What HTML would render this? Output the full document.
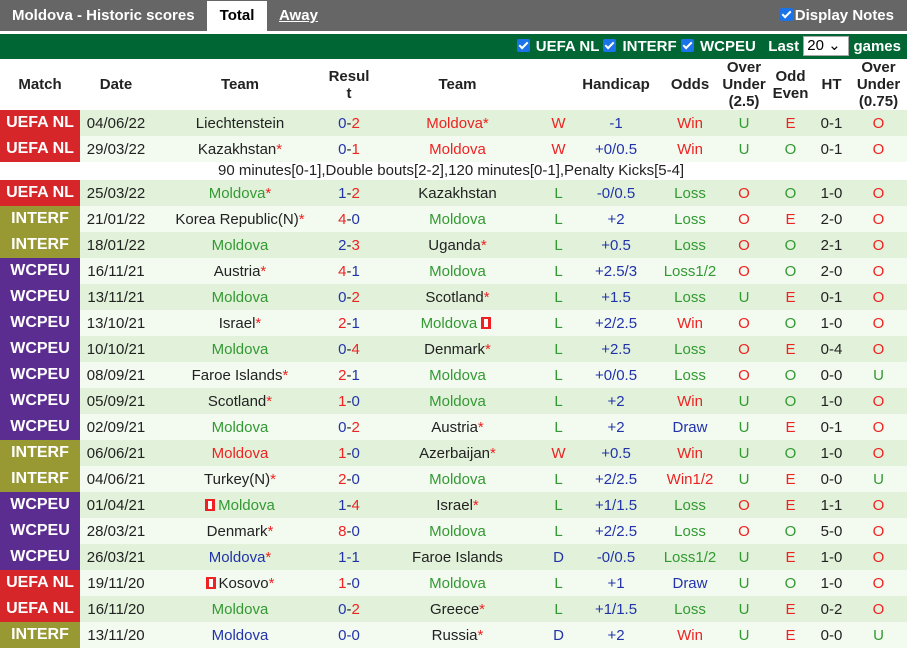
<!DOCTYPE html>
<html><head><meta charset="utf-8"><style>
*{margin:0;padding:0;box-sizing:border-box}
body{width:907px;height:651px;overflow:hidden;background:#fff;font-family:"Liberation Sans",Arial,sans-serif;font-size:15px;color:#222}
.top{height:33px;background:#666;position:relative;border-bottom:2px solid #fff}
.top .t{position:absolute;left:12px;top:7px;color:#fff;font-weight:bold;font-size:15px}
.tab{position:absolute;left:207px;top:1px;width:60px;height:31px;background:#fff;font-weight:bold;text-align:center;line-height:29px;color:#000}
.away{position:absolute;left:279px;top:7px;color:#fff;font-weight:bold;text-decoration:underline}
.dn{position:absolute;right:13px;top:7px;color:#fff;font-weight:bold}
.cb{display:inline-block;width:13px;height:13px;background:#1a73e8;border-radius:2px;vertical-align:-1px;position:relative;margin-right:2px}
.cb:after{content:"";position:absolute;left:4px;top:1px;width:3px;height:7px;border:solid #fff;border-width:0 2px 2px 0;transform:rotate(45deg)}
.green{height:26px;background:#006633;color:#fff;font-weight:bold;text-align:right;padding-right:6px;line-height:25px;border-top:1px solid #fff}
.sel{display:inline-block;background:#fff;color:#000;font-weight:normal;width:46px;height:20px;line-height:18px;border:1px solid #aaa;padding-left:3px;vertical-align:1px;text-align:left;font-size:15px}
table{border-collapse:collapse;table-layout:fixed;width:907px}
td,th{text-align:center;white-space:nowrap;overflow:hidden;padding:0}
th{height:51px;font-weight:bold;color:#222;line-height:17px}
tr.ra td{background:#e2f2da}
tr.rb td{background:#f3faf0}
tr.n td{background:#fff;height:18px;line-height:16px;font-size:15px}
td{height:26px}
td.m{color:#fff;font-weight:bold;font-size:16px}
.un{background:#d7262a!important}.it{background:#999933!important}.wc{background:#5c2d91!important}
.r{color:#e22}.g{color:#339933}.b{color:#2233aa}.k{color:#222}
.fl{display:inline-block;width:10px;height:12px;background:#e22;position:relative;vertical-align:-1px;margin-right:3px}
.fl:after{content:"";position:absolute;left:3px;top:2px;width:4px;height:8px;background:#fff}
</style></head><body>
<div class="top"><span class="t">Moldova - Historic scores</span><div class="tab">Total</div><span class="away">Away</span><span class="dn"><span class="cb"></span>Display Notes</span></div>
<div class="green"><span class="cb"></span> UEFA NL <span class="cb"></span> INTERF <span class="cb"></span> WCPEU &nbsp; Last <span class="sel">20 &#8964;</span> games</div>
<table>
<colgroup><col style="width:80px"><col style="width:72px"><col style="width:176px"><col style="width:42px"><col style="width:175px"><col style="width:27px"><col style="width:88px"><col style="width:60px"><col style="width:48px"><col style="width:45px"><col style="width:37px"><col style="width:57px"></colgroup>
<tr><th>Match</th><th>Date</th><th>Team</th><th>Resul<br>t</th><th>Team</th><th></th><th>Handicap</th><th>Odds</th><th>Over<br>Under<br>(2.5)</th><th>Odd<br>Even</th><th>HT</th><th>Over<br>Under<br>(0.75)</th></tr>
<tr class="ra"><td class="m un">UEFA NL</td><td>04/06/22</td><td>Liechtenstein</td><td><span class="b">0</span>-<span class="r">2</span></td><td class="r">Moldova*</td><td class="r">W</td><td class="b">-1</td><td class="r">Win</td><td class="g">U</td><td class="r">E</td><td>0-1</td><td class="r">O</td></tr>
<tr class="rb"><td class="m un">UEFA NL</td><td>29/03/22</td><td>Kazakhstan<span class="r">*</span></td><td><span class="b">0</span>-<span class="r">1</span></td><td class="r">Moldova</td><td class="r">W</td><td class="b">+0/0.5</td><td class="r">Win</td><td class="g">U</td><td class="g">O</td><td>0-1</td><td class="r">O</td></tr>
<tr class="n"><td></td><td></td><td colspan="8" style="text-align:left;padding-left:66px">90 minutes[0-1],Double bouts[2-2],120 minutes[0-1],Penalty Kicks[5-4]</td><td></td><td></td></tr>
<tr class="ra"><td class="m un">UEFA NL</td><td>25/03/22</td><td class="g">Moldova<span class="r">*</span></td><td><span class="b">1</span>-<span class="r">2</span></td><td>Kazakhstan</td><td class="g">L</td><td class="b">-0/0.5</td><td class="g">Loss</td><td class="r">O</td><td class="g">O</td><td>1-0</td><td class="r">O</td></tr>
<tr class="rb"><td class="m it">INTERF</td><td>21/01/22</td><td>Korea Republic(N)<span class="r">*</span></td><td><span class="r">4</span>-<span class="b">0</span></td><td class="g">Moldova</td><td class="g">L</td><td class="b">+2</td><td class="g">Loss</td><td class="r">O</td><td class="r">E</td><td>2-0</td><td class="r">O</td></tr>
<tr class="ra"><td class="m it">INTERF</td><td>18/01/22</td><td class="g">Moldova</td><td><span class="b">2</span>-<span class="r">3</span></td><td>Uganda<span class="r">*</span></td><td class="g">L</td><td class="b">+0.5</td><td class="g">Loss</td><td class="r">O</td><td class="g">O</td><td>2-1</td><td class="r">O</td></tr>
<tr class="rb"><td class="m wc">WCPEU</td><td>16/11/21</td><td>Austria<span class="r">*</span></td><td><span class="r">4</span>-<span class="b">1</span></td><td class="g">Moldova</td><td class="g">L</td><td class="b">+2.5/3</td><td class="g">Loss1/2</td><td class="r">O</td><td class="g">O</td><td>2-0</td><td class="r">O</td></tr>
<tr class="ra"><td class="m wc">WCPEU</td><td>13/11/21</td><td class="g">Moldova</td><td><span class="b">0</span>-<span class="r">2</span></td><td>Scotland<span class="r">*</span></td><td class="g">L</td><td class="b">+1.5</td><td class="g">Loss</td><td class="g">U</td><td class="r">E</td><td>0-1</td><td class="r">O</td></tr>
<tr class="rb"><td class="m wc">WCPEU</td><td>13/10/21</td><td>Israel<span class="r">*</span></td><td><span class="r">2</span>-<span class="b">1</span></td><td class="g">Moldova <span class="fl"></span></td><td class="g">L</td><td class="b">+2/2.5</td><td class="r">Win</td><td class="r">O</td><td class="g">O</td><td>1-0</td><td class="r">O</td></tr>
<tr class="ra"><td class="m wc">WCPEU</td><td>10/10/21</td><td class="g">Moldova</td><td><span class="b">0</span>-<span class="r">4</span></td><td>Denmark<span class="r">*</span></td><td class="g">L</td><td class="b">+2.5</td><td class="g">Loss</td><td class="r">O</td><td class="r">E</td><td>0-4</td><td class="r">O</td></tr>
<tr class="rb"><td class="m wc">WCPEU</td><td>08/09/21</td><td>Faroe Islands<span class="r">*</span></td><td><span class="r">2</span>-<span class="b">1</span></td><td class="g">Moldova</td><td class="g">L</td><td class="b">+0/0.5</td><td class="g">Loss</td><td class="r">O</td><td class="g">O</td><td>0-0</td><td class="g">U</td></tr>
<tr class="ra"><td class="m wc">WCPEU</td><td>05/09/21</td><td>Scotland<span class="r">*</span></td><td><span class="r">1</span>-<span class="b">0</span></td><td class="g">Moldova</td><td class="g">L</td><td class="b">+2</td><td class="r">Win</td><td class="g">U</td><td class="g">O</td><td>1-0</td><td class="r">O</td></tr>
<tr class="rb"><td class="m wc">WCPEU</td><td>02/09/21</td><td class="g">Moldova</td><td><span class="b">0</span>-<span class="r">2</span></td><td>Austria<span class="r">*</span></td><td class="g">L</td><td class="b">+2</td><td class="b">Draw</td><td class="g">U</td><td class="r">E</td><td>0-1</td><td class="r">O</td></tr>
<tr class="ra"><td class="m it">INTERF</td><td>06/06/21</td><td class="r">Moldova</td><td><span class="r">1</span>-<span class="b">0</span></td><td>Azerbaijan<span class="r">*</span></td><td class="r">W</td><td class="b">+0.5</td><td class="r">Win</td><td class="g">U</td><td class="g">O</td><td>1-0</td><td class="r">O</td></tr>
<tr class="rb"><td class="m it">INTERF</td><td>04/06/21</td><td>Turkey(N)<span class="r">*</span></td><td><span class="r">2</span>-<span class="b">0</span></td><td class="g">Moldova</td><td class="g">L</td><td class="b">+2/2.5</td><td class="r">Win1/2</td><td class="g">U</td><td class="r">E</td><td>0-0</td><td class="g">U</td></tr>
<tr class="ra"><td class="m wc">WCPEU</td><td>01/04/21</td><td class="g"><span class="fl"></span>Moldova</td><td><span class="b">1</span>-<span class="r">4</span></td><td>Israel<span class="r">*</span></td><td class="g">L</td><td class="b">+1/1.5</td><td class="g">Loss</td><td class="r">O</td><td class="r">E</td><td>1-1</td><td class="r">O</td></tr>
<tr class="rb"><td class="m wc">WCPEU</td><td>28/03/21</td><td>Denmark<span class="r">*</span></td><td><span class="r">8</span>-<span class="b">0</span></td><td class="g">Moldova</td><td class="g">L</td><td class="b">+2/2.5</td><td class="g">Loss</td><td class="r">O</td><td class="g">O</td><td>5-0</td><td class="r">O</td></tr>
<tr class="ra"><td class="m wc">WCPEU</td><td>26/03/21</td><td class="b">Moldova<span class="r">*</span></td><td class="b">1-1</td><td>Faroe Islands</td><td class="b">D</td><td class="b">-0/0.5</td><td class="g">Loss1/2</td><td class="g">U</td><td class="r">E</td><td>1-0</td><td class="r">O</td></tr>
<tr class="rb"><td class="m un">UEFA NL</td><td>19/11/20</td><td><span class="fl"></span>Kosovo<span class="r">*</span></td><td><span class="r">1</span>-<span class="b">0</span></td><td class="g">Moldova</td><td class="g">L</td><td class="b">+1</td><td class="b">Draw</td><td class="g">U</td><td class="g">O</td><td>1-0</td><td class="r">O</td></tr>
<tr class="ra"><td class="m un">UEFA NL</td><td>16/11/20</td><td class="g">Moldova</td><td><span class="b">0</span>-<span class="r">2</span></td><td>Greece<span class="r">*</span></td><td class="g">L</td><td class="b">+1/1.5</td><td class="g">Loss</td><td class="g">U</td><td class="r">E</td><td>0-2</td><td class="r">O</td></tr>
<tr class="rb"><td class="m it">INTERF</td><td>13/11/20</td><td class="b">Moldova</td><td class="b">0-0</td><td>Russia<span class="r">*</span></td><td class="b">D</td><td class="b">+2</td><td class="r">Win</td><td class="g">U</td><td class="r">E</td><td>0-0</td><td class="g">U</td></tr>
</table>
</body></html>
